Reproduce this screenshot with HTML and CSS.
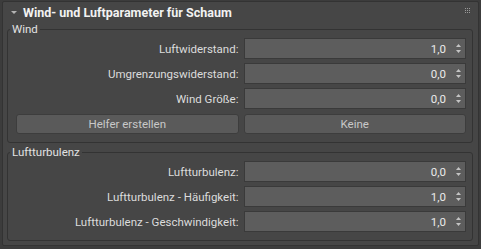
FILE: index.html
```html
<!DOCTYPE html>
<html lang="de">
<head>
  <meta charset="UTF-8">
  <title>Wind- und Luftparameter für Schaum</title>
  <link rel="stylesheet" href="styles.css">
</head>
<body>

  <div class="rollout">
    <div class="rollout-head">
      <span class="arrow"></span>
      <span class="title">Wind- und Luftparameter für Schaum</span>
      <svg class="grip" width="5" height="5" viewBox="0 0 5 5">
        <rect x="0" y="0" width="1" height="1"/><rect x="2" y="0" width="1" height="1"/><rect x="4" y="0" width="1" height="1"/>
        <rect x="0" y="2" width="1" height="1"/><rect x="2" y="2" width="1" height="1"/><rect x="4" y="2" width="1" height="1"/>
        <rect x="0" y="4" width="1" height="1"/><rect x="2" y="4" width="1" height="1"/><rect x="4" y="4" width="1" height="1"/>
      </svg>
    </div>

    <fieldset class="group">
      <legend>Wind</legend>
      <div class="rows">
        <label>Luftwiderstand:</label>
        <div class="spinner"><span>1,0</span><svg class="arrows" width="5" height="9" viewBox="0 0 5 9"><polygon points="2.5,0 5,3 0,3"/><polygon points="0,6 5,6 2.5,9"/></svg></div>

        <label>Umgrenzungswiderstand:</label>
        <div class="spinner"><span>0,0</span><svg class="arrows" width="5" height="9" viewBox="0 0 5 9"><polygon points="2.5,0 5,3 0,3"/><polygon points="0,6 5,6 2.5,9"/></svg></div>

        <label>Wind Größe:</label>
        <div class="spinner"><span>0,0</span><svg class="arrows" width="5" height="9" viewBox="0 0 5 9"><polygon points="2.5,0 5,3 0,3"/><polygon points="0,6 5,6 2.5,9"/></svg></div>

        <button class="btn">Helfer erstellen</button>
        <button class="btn">Keine</button>
      </div>
    </fieldset>

    <fieldset class="group">
      <legend>Luftturbulenz</legend>
      <div class="rows">
        <label>Luftturbulenz:</label>
        <div class="spinner"><span>0,0</span><svg class="arrows" width="5" height="9" viewBox="0 0 5 9"><polygon points="2.5,0 5,3 0,3"/><polygon points="0,6 5,6 2.5,9"/></svg></div>

        <label>Luftturbulenz - Häufigkeit:</label>
        <div class="spinner"><span>1,0</span><svg class="arrows" width="5" height="9" viewBox="0 0 5 9"><polygon points="2.5,0 5,3 0,3"/><polygon points="0,6 5,6 2.5,9"/></svg></div>

        <label>Luftturbulenz - Geschwindigkeit:</label>
        <div class="spinner"><span>1,0</span><svg class="arrows" width="5" height="9" viewBox="0 0 5 9"><polygon points="2.5,0 5,3 0,3"/><polygon points="0,6 5,6 2.5,9"/></svg></div>
      </div>
    </fieldset>
  </div>

</body>
</html>
```

FILE: styles.css
```css
body {
  margin: 0;
  background-color: #3c3c3c;
  font-family: Roboto, "Noto Sans", sans-serif;
  font-size: 11.5px;
  color: #dcdcdc;
}

.rollout {
  margin: 1px 2px 0 2px;
  height: 243px;
  background-color: #464646;
  border: 1px solid #333;
  border-radius: 2px;
}

.rollout-head {
  display: flex;
  align-items: center;
  height: 20px;
  padding: 0 8px 0 8px;
}

.arrow {
  width: 0;
  height: 0;
  border-left: 3px solid transparent;
  border-right: 3px solid transparent;
  border-top: 3px solid #b4b4b4;
  margin-right: 6px;
}

.title {
  font-size: 12.5px;
  font-weight: bold;
  color: #f2f2f2;
  flex: 1;
}

.grip {
  fill: #9a9a9a;
  margin-top: -3px;
}

.group {
  margin: 0 5px 2px 4px;
  padding: 2px 6px 8px 8px;
  border: 1px solid #333;
  border-radius: 3px;
}

.group legend {
  margin-left: -6px;
  padding: 0 2px;
  line-height: 14px;
  color: #e2e2e2;
}

.rows {
  display: grid;
  grid-template-columns: 1fr 1fr;
  column-gap: 5px;
  row-gap: 4px;
  align-items: center;
}

.rows label {
  text-align: right;
}

.spinner {
  display: flex;
  align-items: center;
  justify-content: flex-end;
  height: 19px;
  background-color: #5d5d5d;
  border: 1px solid #3a3a3a;
  padding-right: 4px;
  color: #eaeaea;
}

.arrows {
  fill: #c4c4c4;
  margin-left: 10px;
}

.btn {
  height: 20px;
  margin-top: 1px;
  background-color: #5a5a5a;
  border: 1px solid #3d3d3d;
  border-radius: 3px;
  color: #c8c8c8;
  font-family: inherit;
  font-size: 11.5px;
  padding: 0;
}
```
